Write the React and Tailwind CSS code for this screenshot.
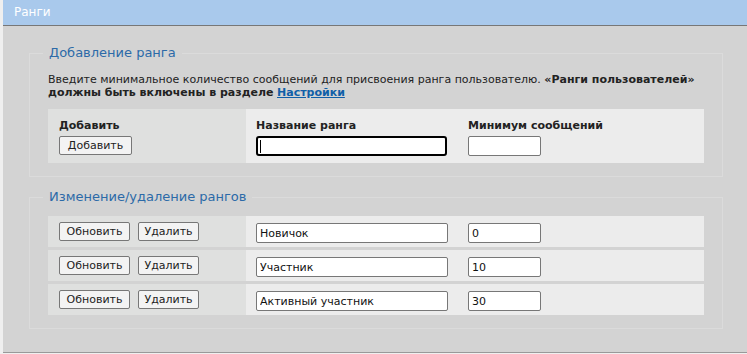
const font = { fontFamily: '"DejaVu Sans", Verdana, sans-serif' };

function Btn({ children, w }) {
  return (
    <button
      type="button"
      className={`${w} h-[19px] flex-none rounded-[2px] border border-[#777] bg-[#f3f3f3] text-[11px] leading-none text-[#222]`}
    >
      {children}
    </button>
  );
}

function Field({ value, w }) {
  return (
    <input
      readOnly
      value={value}
      className={`${w} h-[20px] rounded-[2px] border border-[#777] bg-white px-[3px] text-[11px] text-[#111] outline-none`}
    />
  );
}

const ranks = [
  { name: "Новичок", min: "0" },
  { name: "Участник", min: "10" },
  { name: "Активный участник", min: "30" },
];

export default function App() {
  return (
    <div className="h-[354px] w-[747px] bg-[#efefef] pl-[3px]" style={font}>
      <div className="h-[353px] border-b border-[#999] bg-[#d3d3d3]">
        <div className="h-[26px] border-b border-[#777] bg-[#a9c9ec] pl-[11px] text-[12px] leading-[25px] text-white">
          Ранги
        </div>

        <fieldset className="ml-[26px] mr-[24px] mt-[19px] border border-[#dbdbdb] px-[18px] pb-[13px] pt-[12px]">
          <legend className="-ml-[5px] px-[6px] text-[13px] leading-[16px] text-[#2c6aa8]">
            Добавление ранга
          </legend>
          <p className="text-[11px] leading-[13px] text-[#222]">
            Введите минимальное количество сообщений для присвоения ранга пользователю.{" "}
            <b>«Ранги пользователей» должны быть включены в разделе</b>{" "}
            <a href="#" className="font-bold text-[#105fa8] underline">
              Настройки
            </a>
          </p>
          <div className="mt-[10px] flex h-[54px] text-[11px] text-[#222]">
            <div className="w-[198px] bg-[#dfe0df] pl-[11px] pt-[10px]">
              <div className="mb-[4px] font-bold leading-[13px]">Добавить</div>
              <Btn w="w-[73px]">Добавить</Btn>
            </div>
            <div className="flex flex-1 bg-[#ececec] pt-[10px]">
              <div className="w-[212px] pl-[10px]">
                <div className="mb-[4px] font-bold leading-[13px]">Название ранга</div>
                <div className="relative h-[20px] w-[191px] rounded-[3px] border-2 border-black bg-white">
                  <span className="absolute left-[2px] top-[2px] h-[13px] w-px bg-black" />
                </div>
              </div>
              <div className="pl-[10px]">
                <div className="mb-[4px] font-bold leading-[13px]">Минимум сообщений</div>
                <Field value="" w="w-[73px]" />
              </div>
            </div>
          </div>
        </fieldset>

        <fieldset className="ml-[26px] mr-[24px] mt-[12px] border border-[#dbdbdb] px-[18px] pb-[13px] pt-[11px]">
          <legend className="-ml-[5px] px-[6px] text-[13px] leading-[16px] text-[#2c6aa8]">
            Изменение/удаление рангов
          </legend>
          <div className="flex flex-col gap-[3px]">
            {ranks.map((r) => (
              <div key={r.name} className="flex h-[31px]">
                <div className="flex w-[198px] items-center gap-[8px] bg-[#dfe0df] pl-[11px]">
                  <Btn w="w-[71px]">Обновить</Btn>
                  <Btn w="w-[61px]">Удалить</Btn>
                </div>
                <div className="flex flex-1 items-center bg-[#ececec]">
                  <div className="w-[212px] pl-[10px]">
                    <Field value={r.name} w="w-[192px]" />
                  </div>
                  <div className="pl-[10px]">
                    <Field value={r.min} w="w-[73px]" />
                  </div>
                </div>
              </div>
            ))}
          </div>
        </fieldset>
      </div>
    </div>
  );
}
